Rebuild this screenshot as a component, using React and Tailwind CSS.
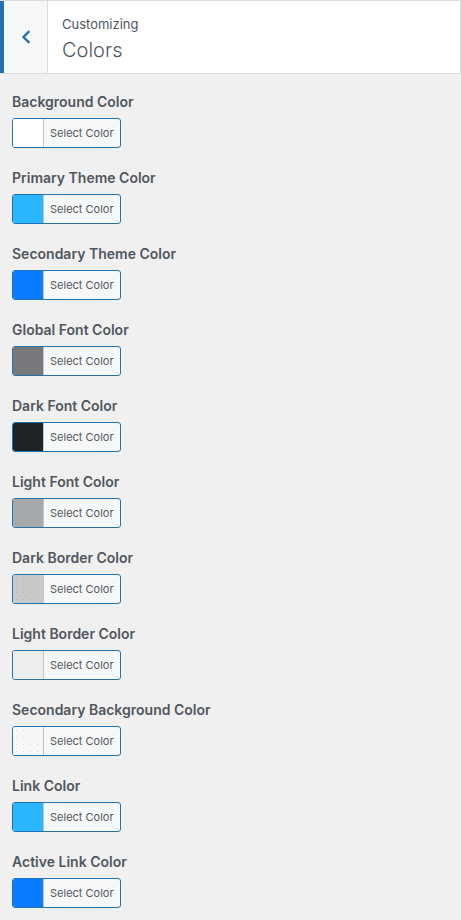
import React from "react";

const controls = [
  { label: "Background Color", color: "#ffffff" },
  { label: "Primary Theme Color", color: "#2ab6ff" },
  { label: "Secondary Theme Color", color: "#0a7cff" },
  { label: "Global Font Color", color: "#77787b" },
  { label: "Dark Font Color", color: "#1d2327" },
  { label: "Light Font Color", color: "#a7aaad", dotted: true },
  { label: "Dark Border Color", color: "#c8c9cb", dotted: true },
  { label: "Light Border Color", color: "#ededed" },
  { label: "Secondary Background Color", color: "#f6f7f7", dotted: true },
  { label: "Link Color", color: "#2ab6ff" },
  { label: "Active Link Color", color: "#0a7cff" },
];

const ColorControl = ({ label, color, dotted }) => (
  <div className="mb-[18px]">
    <div className="text-[14px] leading-[24px] font-semibold text-[#50575e] mb-[4px]">{label}</div>
    <button className="flex h-[30px] w-[109px] rounded-[3px] border border-[#2271b1] overflow-hidden bg-[#f6f7f7] p-0">
      <span
        className="block h-full w-[31px] border-r border-[#c3c4c7]"
        style={{
          backgroundColor: color,
          backgroundImage: dotted
            ? "radial-gradient(rgba(120,120,120,0.22) 0.6px, transparent 0.8px)"
            : undefined,
          backgroundSize: dotted ? "7px 7px" : undefined,
        }}
      />
      <span className="flex-1 flex items-center pl-[6px] text-[11px] text-[#50575e]">Select Color</span>
    </button>
  </div>
);

export default function App() {
  return (
    <div className="w-[461px] min-h-[920px] bg-[#f0f0f1] font-['Inter','Liberation_Sans',sans-serif]">
      <div className="flex h-[74px] bg-white border-t border-b border-r border-[#dcdcde]">
        <div className="w-[4px] bg-[#2271b1]" />
        <div className="w-[44px] bg-[#f6f7f7] border-r border-[#dcdcde] flex items-center justify-center">
          <svg width="12" height="14" viewBox="0 0 12 14" fill="none">
            <path d="M8.5 2 L3.5 7 L8.5 12" stroke="#2271b1" strokeWidth="2.4" strokeLinecap="square" strokeLinejoin="miter" />
          </svg>
        </div>
        <div className="pl-[14px] pt-[14px]">
          <div className="text-[13px] leading-[18px] text-[#50575e]">Customizing</div>
          <div className="text-[20px] leading-[28px] font-light text-[#50575e] mt-[3px]">Colors</div>
        </div>
      </div>
      <div className="pl-[12px] pt-[16px]">
        {controls.map((c) => (
          <ColorControl key={c.label} {...c} />
        ))}
      </div>
    </div>
  );
}
